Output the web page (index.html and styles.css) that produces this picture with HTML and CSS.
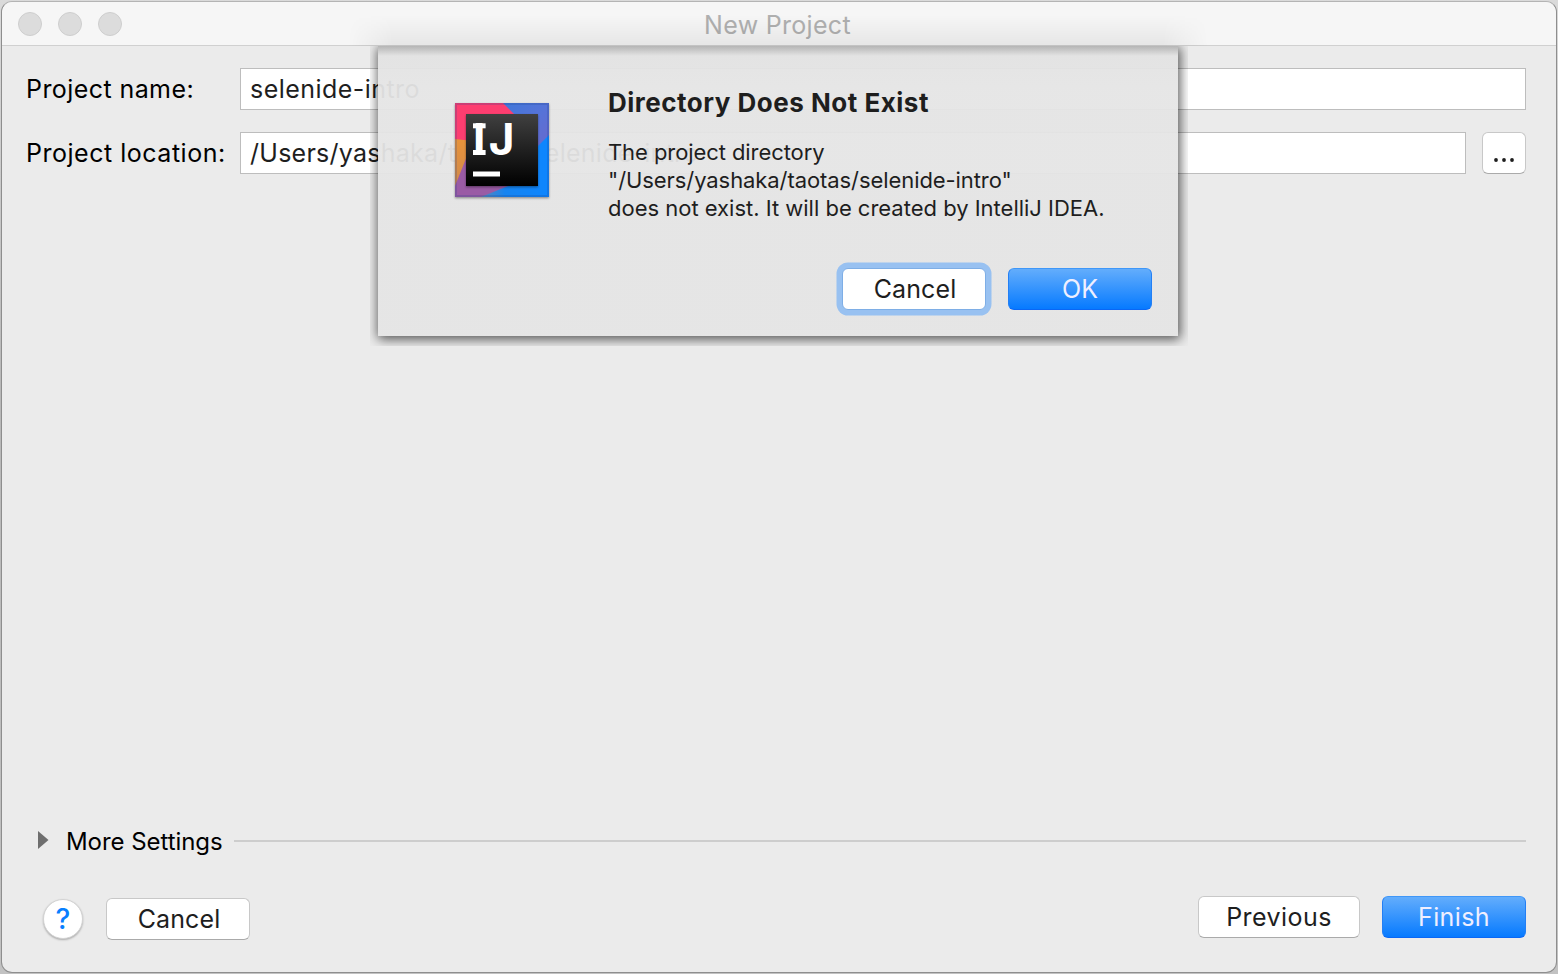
FILE: index.html
```html
<!DOCTYPE html>
<html lang="en">
<head>
<meta charset="utf-8">
<title>New Project</title>
<link rel="stylesheet" href="styles.css">
</head>
<body>
<main class="window">
  <header class="titlebar">
    <div class="lights"><i class="light"></i><i class="light"></i><i class="light"></i></div>
    <h1 class="title">New Project</h1>
  </header>
  <section class="form">
    <div class="row">
      <label class="label"><span class="t-name">Project name:</span></label>
      <div class="field"><span class="t-namevalue">selenide-intro</span></div>
    </div>
    <div class="row">
      <label class="label"><span class="t-location">Project location:</span></label>
      <div class="field"><span class="t-path">/Users/yashaka/taotas/selenide-intro</span></div>
      <button class="button browse" aria-label="Browse"><svg width="24" height="6" viewBox="0 0 24 6"><circle cx="4" cy="3" r="1.9"/><circle cx="12" cy="3" r="1.9"/><circle cx="20" cy="3" r="1.9"/></svg></button>
    </div>
  </section>
  <section class="more">
    <svg class="triangle" width="11" height="18" viewBox="0 0 11 18"><path d="M0 0L10.5 9L0 18Z" fill="#6e6e6e"/></svg>
    <span class="more-text">More Settings</span>
    <span class="rule"></span>
  </section>
  <footer class="footer">
    <button class="help">?</button>
    <button class="button cancel"><span class="t-cancel">Cancel</span></button>
    <span class="spacer"></span>
    <button class="button previous"><span class="t-previous">Previous</span></button>
    <button class="button primary"><span class="t-finish">Finish</span></button>
  </footer>
</main>
<div class="glow"></div>
<section class="dialog" role="dialog">
  <svg class="logo" width="98" height="100" viewBox="0 0 98 100">
    <defs>
      <linearGradient id="base" gradientUnits="userSpaceOnUse" x1="28" y1="0" x2="96" y2="0"><stop offset="0" stop-color="#5b86b8"/><stop offset=".35" stop-color="#1784f0"/><stop offset="1" stop-color="#0d86ff"/></linearGradient>
      <linearGradient id="violet" gradientUnits="userSpaceOnUse" x1="50" y1="0" x2="96" y2="50"><stop offset="0" stop-color="#3f78da"/><stop offset=".5" stop-color="#5673d8"/><stop offset="1" stop-color="#6a68cc"/></linearGradient>
      <linearGradient id="orange" x1="0" y1="0" x2="0" y2="1"><stop offset="0" stop-color="#e8933a"/><stop offset="1" stop-color="#d08a4c"/></linearGradient>
      <linearGradient id="black" gradientUnits="userSpaceOnUse" x1="0" y1="13" x2="0" y2="85"><stop offset="0" stop-color="#404040"/><stop offset="1" stop-color="#000"/></linearGradient>
      <filter id="soft" x="-10%" y="-10%" width="120%" height="125%" color-interpolation-filters="sRGB"><feDropShadow dx="0" dy="1.2" stdDeviation="1.2" flood-opacity=".4"/></filter>
    </defs>
    <g filter="url(#soft)">
      <rect x="2" y="2" width="94" height="94" fill="url(#base)"/>
      <path d="M2 80L20 38L60 60V83L28 96H2Z" fill="#9a5ba5"/>
      <path d="M46 2H96V34L80 50L50 20Z" fill="url(#violet)"/>
      <path d="M2 36L20 39L16 50L2 85Z" fill="url(#orange)"/>
      <path d="M2 2H50L68 20V40H20L2 38Z" fill="#fd3e70"/>
    </g>
    <rect x="3" y="3" width="92" height="92" fill="none" stroke="#20408a" stroke-opacity=".22" stroke-width="2"/>
    <rect x="13" y="13" width="72" height="72" fill="#222" filter="url(#soft)"/>
    <rect x="13" y="13" width="72" height="72" fill="url(#black)"/>
    <text class="logo-text" x="26.3" y="54" text-anchor="middle">I</text>
    <rect x="20" y="22.3" width="12.6" height="5" fill="#fff"/>
    <rect x="20" y="49" width="12.6" height="5" fill="#fff"/>
    <text class="logo-text" x="35.8" y="54">J</text>
    <rect x="20" y="70.5" width="27" height="5" fill="#fff"/>
  </svg>
  <div class="content">
    <h2 class="heading">Directory Does Not Exist</h2>
    <p class="message"><span class="m1">The project directory</span><br><span class="m2">"/Users/yashaka/taotas/selenide-intro"</span><br><span class="m3">does not exist. It will be created by IntelliJ IDEA.</span></p>
    <div class="actions">
      <button class="button focused"><span class="t-cancel">Cancel</span></button>
      <button class="button primary"><span class="t-ok">OK</span></button>
    </div>
  </div>
</section>
</body>
</html>
```
FILE: styles.css
```css
* { box-sizing: border-box; }
html, body { margin: 0; height: 974px; overflow: hidden; }
body { padding: 1px; background: linear-gradient(#dadada, #b8b8b8 40%, #c2c2c2); font-family: Inter, "Liberation Sans", sans-serif; color: #000; }
button { font: inherit; margin: 0; padding: 0; }
.window { height: 972px; display: flex; flex-direction: column; border: 1px solid #8e8e8e; border-top-color: #b4b4b4; border-radius: 11px; background: #ebebeb; overflow: hidden; }
.titlebar { display: grid; grid-template-columns: 1fr auto 1fr; align-items: center; flex: none; height: 44px; background: #f6f6f6; border-bottom: 1px solid #d0d0d0; }
.lights { display: flex; gap: 16px; padding-left: 16px; }
.light { width: 24px; height: 24px; border: 1px solid #cecece; border-radius: 50%; background: #dcdcdc; }
.title { grid-column: 2; margin: 3px 3px 0 0; font-size: 25px; font-weight: 400; letter-spacing: .3px; color: #b0b0b0; line-height: 30px; white-space: nowrap; }
.form { display: flex; flex-direction: column; gap: 22px; padding: 22px 30px 0 24px; }
.row { display: flex; height: 42px; }
.label { width: 214px; font-size: 25px; line-height: 42px; white-space: nowrap; }
.t-name { letter-spacing: .42px; }
.t-location { letter-spacing: .52px; }
.t-namevalue { letter-spacing: .45px; }
.t-path { letter-spacing: .26px; }
.field { flex: 1; padding-left: 9px; border: 1px solid #bdbdbd; background: #fff; color: #1e1e1e; font-size: 25px; line-height: 40px; white-space: nowrap; }
.button { display: flex; align-items: center; justify-content: center; width: 144px; height: 42px; border: 1px solid #c8c8c8; border-bottom-color: #aaa; border-radius: 6px; background: #fff; color: #1e1e1e; font-size: 25px; white-space: nowrap; }
.t-cancel { padding-left: 2px; letter-spacing: .1px; }
.t-previous { letter-spacing: .45px; }
.t-finish { letter-spacing: .4px; }
.browse { width: 44px; margin-left: 16px; padding-top: 14px; fill: #1e1e1e; }
.more { display: flex; align-items: center; margin-top: auto; padding: 0 30px 0 36px; height: 30px; }
.triangle { margin-top: -4px; }
.more-text { margin-left: 17px; width: 168px; font-size: 24px; letter-spacing: -.06px; line-height: 30px; white-space: nowrap; }
.rule { flex: 1; height: 2px; background: #cdcdcd; margin-top: -2px; }
.footer { display: flex; align-items: flex-start; margin-top: 39px; height: 76px; padding: 0 30px 0 41px; }
.help { width: 40px; height: 40px; margin: 3px 23px 0 0; border: 1px solid #d3d3d3; border-radius: 50%; background: #fff; box-shadow: 0 1px 2px #0004; color: #087fff; font-size: 28px; font-weight: 500; line-height: 38px; }
.cancel { margin-top: 2px; }
.spacer { flex: 1; }
.previous { width: 162px; margin-right: 22px; }
.primary { color: #efefff; border-color: #3f97f8 #237ff5 #0a67f5; background: linear-gradient(#63adfc, #067aff); }
.glow { position: absolute; left: 348px; top: 15px; width: 860px; height: 31px; background: linear-gradient(#0000, #00000010); -webkit-mask: linear-gradient(90deg, #0000, #000 45px, #000 815px, #0000); }
.dialog { position: absolute; left: 378px; top: 46px; width: 800px; height: 290px; display: flex; padding: 43px 26px 0 75px; background: linear-gradient(#0003, #0000 10px), linear-gradient(#e2e2e2f0, #e5e5e5f2 45px); box-shadow: 1px 2px 11px 1px #000a; clip-path: inset(0 -10px -10px -8px); }
.logo { flex: none; width: 98px; height: 100px; margin-top: 12px; }
.logo-text { font: 700 44px Inter, sans-serif; fill: #fff; }
.content { flex: 1; padding-left: 57px; }
.heading { margin: 0; font-size: 26px; letter-spacing: .5px; line-height: 28px; font-weight: 700; color: #1e1e1e; white-space: nowrap; }
.message { margin: 21px 0 0; color: #1e1e1e; font-size: 22px; line-height: 28px; white-space: nowrap; }
.m1, .m2 { letter-spacing: -.08px; }
.m3 { letter-spacing: -.01px; }
.actions { display: flex; justify-content: flex-end; gap: 22px; margin-top: 46px; }
.focused { border-color: #7eaee6; box-shadow: 0 0 0 5.5px #98c1f1; }
```
